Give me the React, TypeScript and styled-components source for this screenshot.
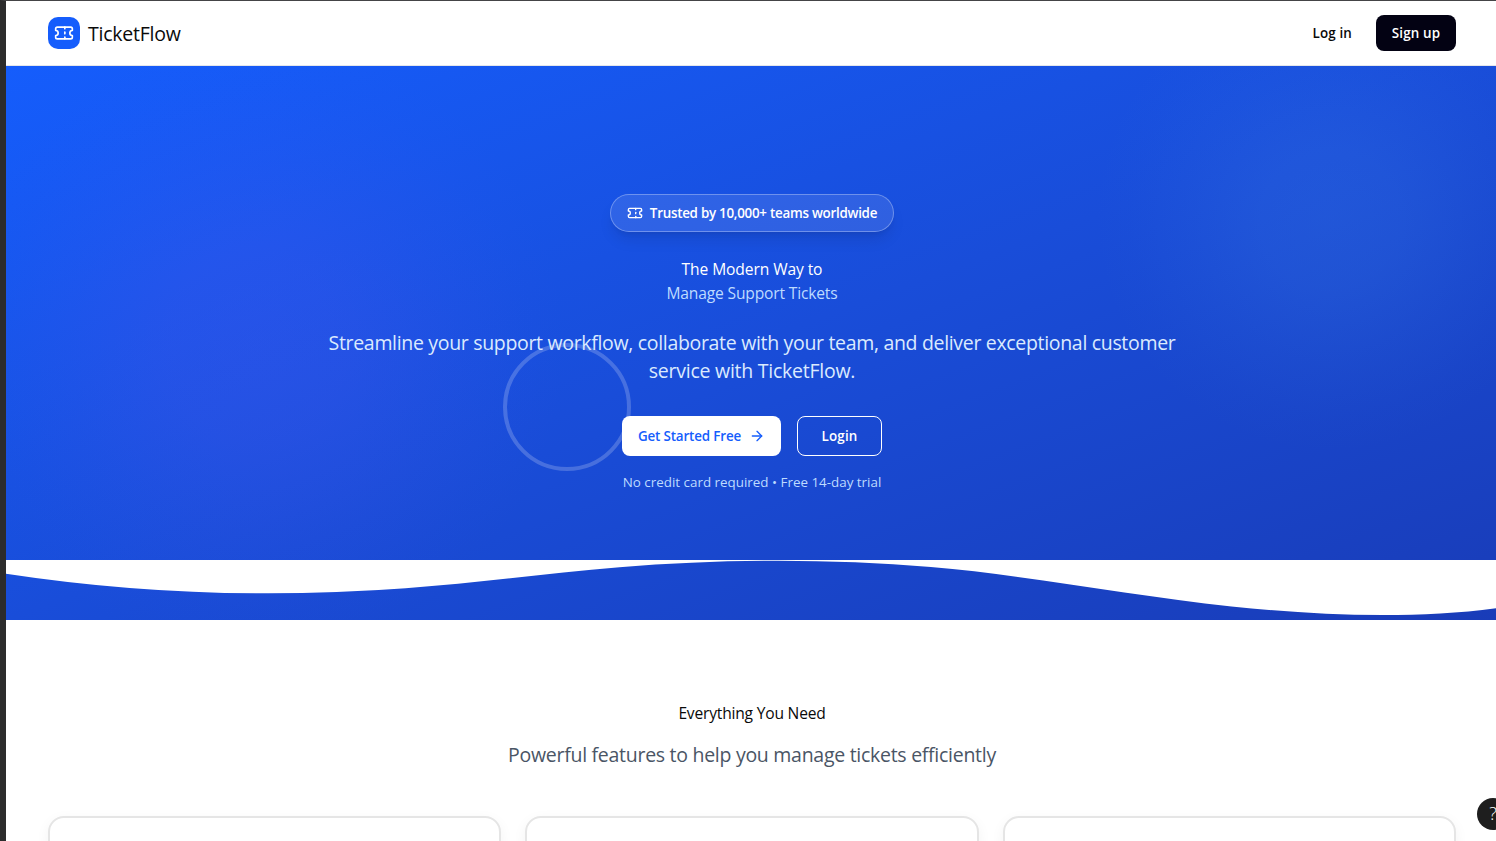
import React from "react";
import styled, { createGlobalStyle } from "styled-components";
import { ArrowRight } from "lucide-react";

const GlobalStyle = createGlobalStyle`
  * { box-sizing: border-box; }
  body {
    margin: 0;
    overflow: hidden;
    background: #fff;
    font-family: "Open Sans", "Noto Sans", sans-serif;
    color: #0a0a0a;
  }
  p, h1, h2 { margin: 0; font-weight: 400; }
`;

const Frame = styled.div`
  position: relative;
  height: 841px;
  width: 1496px;
  overflow: hidden;
  border-left: 6px solid #2c2c2c;
  border-top: 1px solid #444446;
`;

const Page = styled.div`
  width: 1492px;
`;

const Text = styled.span<{ $size: number; $track?: number; $weight?: number; $color?: string }>`
  font-size: ${(p) => p.$size}px;
  letter-spacing: ${(p) => p.$track ?? 0}px;
  font-weight: ${(p) => p.$weight ?? 400};
  color: ${(p) => p.$color ?? "inherit"};
  white-space: nowrap;
`;

const Header = styled.header`
  display: flex;
  align-items: center;
  justify-content: space-between;
  height: 65px;
  padding: 0 42px;
  background: #fff;
  border-bottom: 1px solid #e5e7eb;
`;

const Brand = styled.div`
  display: flex;
  align-items: center;
  gap: 8px;
`;

const LogoTile = styled.div`
  display: grid;
  place-items: center;
  width: 32px;
  height: 32px;
  border-radius: 10px;
  background: #155dfc;
  color: #fff;
`;

const Nav = styled.nav`
  display: flex;
  align-items: center;
  gap: 24px;
`;

const SignUp = styled.button`
  width: 80px;
  height: 36px;
  padding: 0;
  border: 0;
  border-radius: 8px;
  background: #030213;
  color: #fff;
  font-family: inherit;
`;

const Hero = styled.section`
  position: relative;
  height: 554px;
  overflow: hidden;
  padding-top: 128px;
  background: linear-gradient(to bottom right, #155dfc, #194dd9 50%, #193cb8);
  color: #fff;
`;

const Glow = styled.div<{ $x: number; $y: number; $r: number; $rgb: string; $alpha: number }>`
  position: absolute;
  left: ${(p) => p.$x - p.$r}px;
  top: ${(p) => p.$y - p.$r}px;
  width: ${(p) => p.$r * 2}px;
  height: ${(p) => p.$r * 2}px;
  background: radial-gradient(
    closest-side,
    rgba(${(p) => p.$rgb}, ${(p) => p.$alpha}),
    rgba(${(p) => p.$rgb}, ${(p) => p.$alpha * 0.85}) 30%,
    rgba(${(p) => p.$rgb}, ${(p) => p.$alpha * 0.4}) 62%,
    rgba(${(p) => p.$rgb}, ${(p) => p.$alpha * 0.1}) 85%,
    rgba(${(p) => p.$rgb}, 0)
  );
`;

const Ring = styled.div`
  position: absolute;
  left: 497px;
  top: 277px;
  width: 128px;
  height: 128px;
  border: 4px solid rgba(255, 255, 255, 0.2);
  border-radius: 50%;
`;

const HeroContent = styled.div`
  position: relative;
  display: flex;
  flex-direction: column;
  align-items: center;
`;

const Badge = styled.div`
  display: flex;
  align-items: center;
  justify-content: center;
  gap: 7px;
  width: 284px;
  height: 38px;
  margin-bottom: 24px;
  border: 1px solid rgba(255, 255, 255, 0.3);
  border-radius: 19px;
  background: rgba(255, 255, 255, 0.1);
  box-shadow: 0 10px 15px -3px rgba(0, 0, 0, 0.1), 0 4px 6px -4px rgba(0, 0, 0, 0.1);
`;

const Line = styled.p<{ $h: number; $drop?: number }>`
  display: flex;
  justify-content: center;
  align-items: center;
  height: ${(p) => p.$h}px;
  padding-top: ${(p) => p.$drop ?? 0}px;
`;

const Lead = styled.div`
  margin: 24px 0 32px;
`;

const Actions = styled.div`
  display: flex;
  gap: 16px;
  margin-bottom: 16px;
`;

const ActionButton = styled.button<{ $outline?: boolean }>`
  display: flex;
  align-items: center;
  justify-content: center;
  gap: 8px;
  width: ${(p) => (p.$outline ? 85 : 159)}px;
  height: 40px;
  padding: 0;
  border: ${(p) => (p.$outline ? "1px solid #fff" : "0")};
  border-radius: 8px;
  background: ${(p) => (p.$outline ? "transparent" : "#fff")};
  color: ${(p) => (p.$outline ? "#fff" : "#155dfc")};
  font-family: inherit;
`;

const Wave = styled.svg`
  position: absolute;
  left: 0;
  bottom: 0;
  width: 100%;
  height: 60px;
`;

const Features = styled.section`
  padding: 80px 42px 0;
`;

const FeatureHeading = styled.div`
  display: flex;
  flex-direction: column;
  gap: 16px;
  margin-bottom: 48px;
`;

const Cards = styled.div`
  display: grid;
  grid-template-columns: repeat(3, 1fr);
  gap: 24px;
`;

const Card = styled.article`
  height: 230px;
  border: 2px solid #e5e5e5;
  border-radius: 16px;
  background: #fff;
  box-shadow: 0 4px 14px rgba(0, 0, 0, 0.05);
`;

const Help = styled.div`
  position: absolute;
  left: 1471px;
  top: 797px;
  display: grid;
  place-items: center;
  width: 32px;
  height: 32px;
  padding-bottom: 2px;
  border-radius: 50%;
  background: #1e1e1e;
  color: #fff;
`;

const TicketIcon = ({ size }: { size: number }) => (
  <svg width={size} height={size} viewBox="0 0 24 24" fill="none" stroke="currentColor" strokeWidth={2} strokeLinecap="round" strokeLinejoin="round">
    <path d="M2 9a3 3 0 0 1 0 6v2a2 2 0 0 0 2 2h16a2 2 0 0 0 2-2v-2a3 3 0 0 1 0-6V7a2 2 0 0 0-2-2H4a2 2 0 0 0-2 2Z" />
    <path d="M13 5v2" />
    <path d="M13 17v2" />
    <path d="M13 11v2" />
  </svg>
);

export default function App() {
  return (
    <>
      <GlobalStyle />
      <Frame>
        <Page>
          <Header>
            <Brand>
              <LogoTile><TicketIcon size={20} /></LogoTile>
              <Line $h={28}><Text $size={19.5} $track={-0.24}>TicketFlow</Text></Line>
            </Brand>
            <Nav>
              <Text $size={13.4} $weight={600} $track={0.14}>Log in</Text>
              <SignUp><Text $size={13.4} $weight={600} $track={0.14}>Sign up</Text></SignUp>
            </Nav>
          </Header>
          <Hero>
            <Glow $x={250} $y={280} $r={310} $rgb="90, 85, 240" $alpha={0.22} />
            <Glow $x={1324} $y={152} $r={235} $rgb="70, 140, 235" $alpha={0.18} />
            <Ring />
            <HeroContent>
              <Badge>
                <TicketIcon size={16} />
                <Text $size={13.4} $weight={600} $track={-0.27}>Trusted by 10,000+ teams worldwide</Text>
              </Badge>
              <h1>
                <Line as="span" $h={24} $drop={2}><Text $size={15.6} $track={-0.1}>The Modern Way to</Text></Line>
                <Line as="span" $h={24} $drop={2}><Text $size={15.6} $track={-0.17} $color="#bedbff">Manage Support Tickets</Text></Line>
              </h1>
              <Lead>
                <Line $h={28}><Text $size={19.5} $track={-0.32} $color="#dbeafe">Streamline your support workflow, collaborate with your team, and deliver exceptional customer</Text></Line>
                <Line $h={28}><Text $size={19.5} $track={-0.25} $color="#dbeafe">service with TicketFlow.</Text></Line>
              </Lead>
              <Actions>
                <ActionButton>
                  <Text $size={13.4} $weight={600} $track={-0.15}>Get Started Free</Text>
                  <ArrowRight size={16} />
                </ActionButton>
                <ActionButton $outline><Text $size={13.4} $weight={600} $track={0.14}>Login</Text></ActionButton>
              </Actions>
              <Line $h={20}><Text $size={13.4} $color="#bedbff">No credit card required • Free 14-day trial</Text></Line>
            </HeroContent>
            <Wave viewBox="0 0 1200 120" preserveAspectRatio="none" fill="#fff">
              <path d="M321.39,56.44c58-10.79,114.16-30.13,172-41.86,82.39-16.72,168.19-17.73,250.45-.39C823.78,31,906.67,72,985.66,92.83c70.05,18.48,146.53,26.09,214.34,3V0H0V27.35A600.21,600.21,0,0,0,321.39,56.44Z" />
            </Wave>
          </Hero>
          <Features>
            <FeatureHeading>
              <Line as="h2" $h={24} $drop={2}><Text $size={15.6} $track={-0.2}>Everything You Need</Text></Line>
              <Line $h={28}><Text $size={19.5} $track={-0.28} $color="#4a5565">Powerful features to help you manage tickets efficiently</Text></Line>
            </FeatureHeading>
            <Cards><Card /><Card /><Card /></Cards>
          </Features>
        </Page>
        <Help><Text $size={18} $weight={300}>?</Text></Help>
      </Frame>
    </>
  );
}
